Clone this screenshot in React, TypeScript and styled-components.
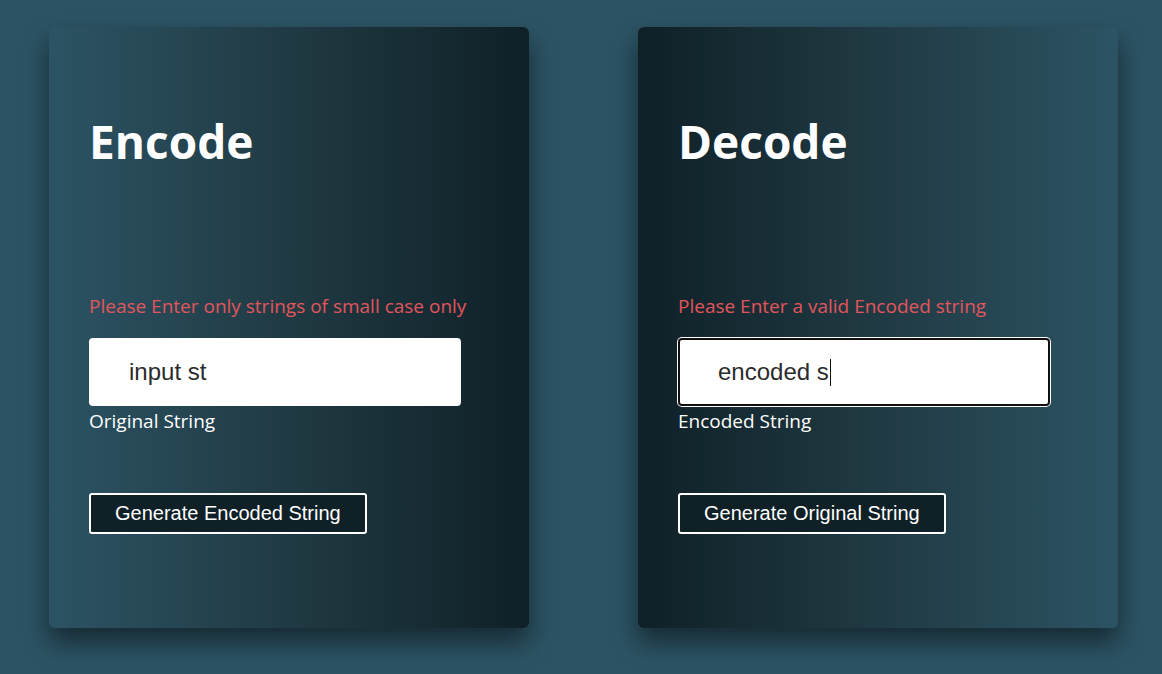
import React from "react";
import styled, { createGlobalStyle } from "styled-components";

const GlobalStyle = createGlobalStyle`
  html, body {
    margin: 0;
    padding: 0;
    background: #2c5364;
    font-family: "Open Sans", "Noto Sans", sans-serif;
  }
  * { box-sizing: border-box; }
`;

const Page = styled.main`
  display: flex;
  gap: 109px;
  padding: 27px 0 0 49px;
  min-height: 674px;
`;

const Card = styled.section<{ $reverse?: boolean }>`
  width: 480px;
  height: 601px;
  border-radius: 6px;
  padding: 90px 40px 0;
  display: flex;
  flex-direction: column;
  align-items: flex-start;
  background: linear-gradient(
    ${(p) => (p.$reverse ? "to left" : "to right")},
    #2c5364,
    #203a43,
    #0f2027
  );
  box-shadow: 0 14px 26px rgba(0, 0, 0, 0.5);
`;

const Title = styled.h1`
  margin: 0;
  font-size: 46px;
  line-height: 48px;
  font-weight: 700;
  color: #ffffff;
`;

const ErrorText = styled.p`
  margin: 129px 0 0;
  font-size: 19px;
  line-height: 24px;
  color: #e3555c;
`;

const Field = styled.div<{ $focused?: boolean }>`
  margin-top: 20px;
  width: 372px;
  height: 68px;
  border-radius: 4px;
  background: #ffffff;
  padding-left: 40px;
  display: flex;
  align-items: center;
  font-family: "Liberation Sans", Arial, sans-serif;
  font-size: 24px;
  color: #2b2b2b;
  box-shadow: ${(p) =>
    p.$focused ? "inset 0 0 0 2px #101010, 0 0 0 1px #ffffff" : "none"};
`;

const Caret = styled.span`
  display: inline-block;
  width: 1px;
  height: 27px;
  background: #111;
  margin-left: 1px;
`;

const Label = styled.label`
  margin-top: 3px;
  font-size: 19px;
  line-height: 24px;
  color: #ffffff;
`;

const Button = styled.button`
  margin-top: 60px;
  height: 41px;
  padding: 0 24px;
  border: 2px solid #ffffff;
  border-radius: 3px;
  background: #0f2027;
  color: #ffffff;
  font-family: "Liberation Sans", Arial, sans-serif;
  font-size: 20px;
  cursor: pointer;
`;

export default function App() {
  return (
    <>
      <GlobalStyle />
      <Page>
        <Card>
          <Title>Encode</Title>
          <ErrorText>Please Enter only strings of small case only</ErrorText>
          <Field role="textbox">input st</Field>
          <Label>Original String</Label>
          <Button>Generate Encoded String</Button>
        </Card>
        <Card $reverse>
          <Title>Decode</Title>
          <ErrorText>Please Enter a valid Encoded string</ErrorText>
          <Field role="textbox" $focused>
            encoded s
            <Caret />
          </Field>
          <Label>Encoded String</Label>
          <Button>Generate Original String</Button>
        </Card>
      </Page>
    </>
  );
}
